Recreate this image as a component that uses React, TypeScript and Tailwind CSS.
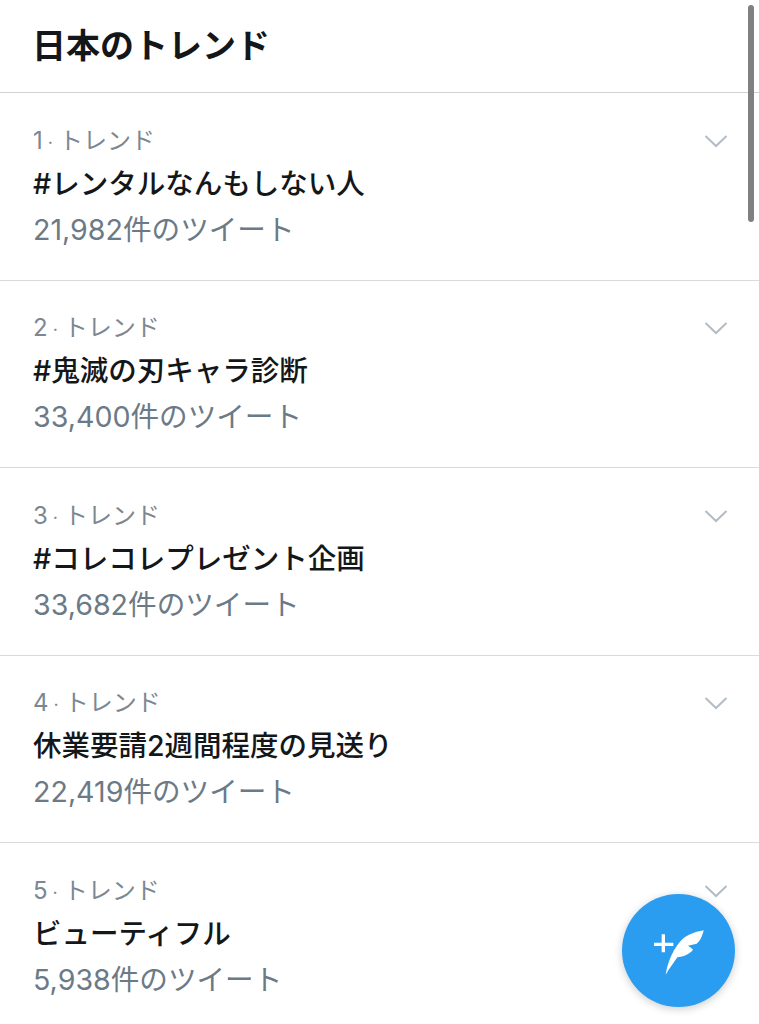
const trends = [
  { rank: 1, name: "#レンタルなんもしない人", count: "21,982件のツイート" },
  { rank: 2, name: "#鬼滅の刃キャラ診断", count: "33,400件のツイート" },
  { rank: 3, name: "#コレコレプレゼント企画", count: "33,682件のツイート" },
  { rank: 4, name: "休業要請2週間程度の見送り", count: "22,419件のツイート" },
  { rank: 5, name: "ビューティフル", count: "5,938件のツイート" },
];

function Chevron() {
  return (
    <svg width="24" height="14" viewBox="0 0 24 14" fill="none" className="shrink-0">
      <path d="M1.5 2 L12 12 L22.5 2" stroke="#b4bcc4" strokeWidth="2" />
    </svg>
  );
}

function TrendRow({ rank, name, count }: { rank: number; name: string; count: string }) {
  return (
    <div className="h-[187.5px] border-b border-[#d8dbdd] pl-[33px] pr-[31px] pt-[32.5px]">
      <div className="flex items-start justify-between">
        <div className="text-[24px] leading-[30px] text-[#7b8792]">
          {rank}
          <span className="ml-[5px] mr-[6px] text-[18px]">·</span>
          トレンド
        </div>
        <div className="pt-[8px]">
          <Chevron />
        </div>
      </div>
      <div className="mt-[8px] text-[28.5px] leading-[36px] font-medium text-[#14171a]">{name}</div>
      <div className="mt-[10px] text-[28.6px] leading-[36px] text-[#6b7a86]">{count}</div>
    </div>
  );
}

export default function App() {
  return (
    <div
      className="relative h-[1024px] w-[759px] overflow-hidden bg-white"
      style={{ fontFamily: 'Inter, "Noto Sans CJK JP", sans-serif' }}
    >
      <header className="flex h-[93px] items-center border-b border-[#d0d3d6] pb-[2px] pl-[32px]">
        <h1 className="text-[34px] font-bold text-[#14171a]">日本のトレンド</h1>
      </header>
      {trends.map((t) => (
        <TrendRow key={t.rank} {...t} />
      ))}
      <div className="absolute left-[748px] top-[5px] h-[217px] w-[6px] rounded-full bg-[#808080]" />
      <button className="absolute left-[622px] top-[894px] flex h-[113px] w-[113px] items-center justify-center rounded-full bg-[#2b9df0] shadow-[0_2px_8px_rgba(0,0,0,0.2)]">
        <svg width="113" height="113" viewBox="66 103 339 339" fill="#fff">
          <path d="M185 224 h10 v25 h25 v10 h-25 v19 h-10 v-19 h-23 v-10 h23 z" />
          <path d="M197 345 C203 305 222 262 250 236 C270 220 295 215 311 212 C306 232 300 245 290 252 L264 258 C270 262 276 266 279 270 C268 284 250 291 232 293 C220 310 206 330 197 345 Z" />
        </svg>
      </button>
    </div>
  );
}
